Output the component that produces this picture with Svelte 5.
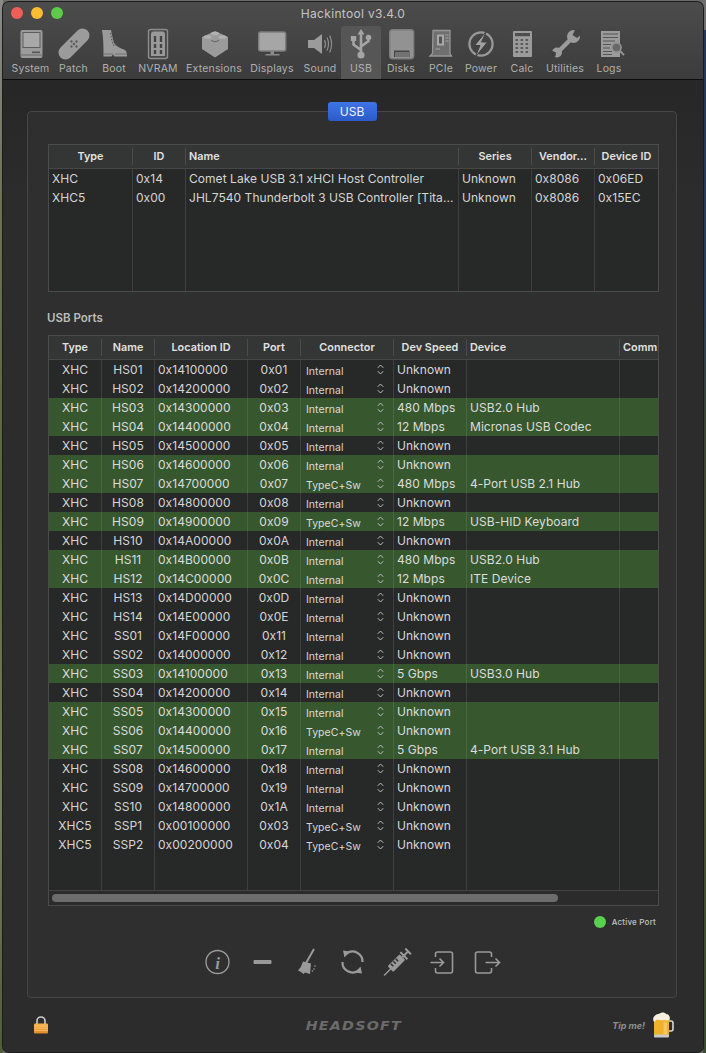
<script>
  const tools = ['System','Patch','Boot','NVRAM','Extensions','Displays','Sound','USB','Disks','PCIe','Power','Calc','Utilities','Logs'];

  const controllers = [
    { type: 'XHC', id: '0x14', name: 'Comet Lake USB 3.1 xHCI Host Controller', series: 'Unknown', vendor: '0x8086', device: '0x06ED' },
    { type: 'XHC5', id: '0x00', name: 'JHL7540 Thunderbolt 3 USB Controller [Tita...', series: 'Unknown', vendor: '0x8086', device: '0x15EC' }
  ];

  const I = 'Internal', T = 'TypeC+Sw', U = 'Unknown';
  // type, name, location, port, connector, speed, device, active
  const ports = [
    ['XHC','HS01','0x14100000','0x01',I,U,'',0],
    ['XHC','HS02','0x14200000','0x02',I,U,'',0],
    ['XHC','HS03','0x14300000','0x03',I,'480 Mbps','USB2.0 Hub',1],
    ['XHC','HS04','0x14400000','0x04',I,'12 Mbps','Micronas USB Codec',1],
    ['XHC','HS05','0x14500000','0x05',I,U,'',0],
    ['XHC','HS06','0x14600000','0x06',I,U,'',1],
    ['XHC','HS07','0x14700000','0x07',T,'480 Mbps','4-Port USB 2.1 Hub',1],
    ['XHC','HS08','0x14800000','0x08',I,U,'',0],
    ['XHC','HS09','0x14900000','0x09',T,'12 Mbps','USB-HID Keyboard',1],
    ['XHC','HS10','0x14A00000','0x0A',I,U,'',0],
    ['XHC','HS11','0x14B00000','0x0B',I,'480 Mbps','USB2.0 Hub',1],
    ['XHC','HS12','0x14C00000','0x0C',I,'12 Mbps','ITE Device',1],
    ['XHC','HS13','0x14D00000','0x0D',I,U,'',0],
    ['XHC','HS14','0x14E00000','0x0E',I,U,'',0],
    ['XHC','SS01','0x14F00000','0x11',I,U,'',0],
    ['XHC','SS02','0x14000000','0x12',I,U,'',0],
    ['XHC','SS03','0x14100000','0x13',I,'5 Gbps','USB3.0 Hub',1],
    ['XHC','SS04','0x14200000','0x14',I,U,'',0],
    ['XHC','SS05','0x14300000','0x15',I,U,'',1],
    ['XHC','SS06','0x14400000','0x16',T,U,'',1],
    ['XHC','SS07','0x14500000','0x17',I,'5 Gbps','4-Port USB 3.1 Hub',1],
    ['XHC','SS08','0x14600000','0x18',I,U,'',0],
    ['XHC','SS09','0x14700000','0x19',I,U,'',0],
    ['XHC','SS10','0x14800000','0x1A',I,U,'',0],
    ['XHC5','SSP1','0x00100000','0x03',T,U,'',0],
    ['XHC5','SSP2','0x00200000','0x04',T,U,'',0]
  ];
</script>

<div class="desktop">
  <div class="window">
    <header class="titlebar">
      <div class="title-row">
        <div class="lights"><i class="red"></i><i class="yellow"></i><i class="green"></i></div>
        <span class="title">Hackintool v3.4.0</span>
      </div>
      <nav class="toolbar">
        {#each tools as tool}
          <div class="tool" class:selected={tool === 'USB'}>
            <svg class="tool-icon" viewBox="0 0 32 32" width="32" height="32">
              {#if tool === 'System'}
                <rect x="5.5" y="2" width="22" height="28" rx="2" fill="#9b9b9b"/>
                <rect x="8" y="4.5" width="17" height="15" fill="#a8a8a8" stroke="#5e5e5e"/>
                <rect x="17" y="23.5" width="8" height="1.6" fill="#555"/>
                <rect x="5.5" y="26.5" width="22" height="1" fill="#6a6a6a"/>
              {:else if tool === 'Patch'}
                <g transform="rotate(-45 16 16)">
                  <rect x="-3" y="9" width="38" height="14" rx="7" fill="#9b9b9b"/>
                  <g fill="#555">
                    <circle cx="16" cy="16" r="1.2"/><circle cx="12.5" cy="16" r="1.2"/><circle cx="19.5" cy="16" r="1.2"/>
                    <circle cx="16" cy="12.5" r="1.2"/><circle cx="16" cy="19.5" r="1.2"/>
                  </g>
                </g>
              {:else if tool === 'Boot'}
                <path d="M4 2 L13 2 L14 7 L15.5 13 C16.5 18 22 20 26 21.5 C28.5 22.5 29 25 29 28.5 L16.5 28.5 L15 26.5 L13.5 28.5 L5.5 28.5 C5.5 20 5.5 10 4 2Z" fill="#9b9b9b"/>
                <path d="M12.5 5 L14 13 L16 18" fill="none" stroke="#5e5e5e" stroke-width="1.2" stroke-dasharray="1.5 1.5"/>
                <path d="M6 26 H15 M17 26 H29" stroke="#6a6a6a" stroke-width=".8"/>
              {:else if tool === 'NVRAM'}
                <rect x="6.5" y="1.5" width="19" height="29" rx="2" fill="#484848" stroke="#8d8d8d" stroke-width="1.4"/>
                <path d="M9 6 Q9 3.5 11 3.5 H21 Q23 3.5 23 6 V28 H9Z" fill="#999"/>
                <path d="M13 8 V14 M13 16 V20 M13 22 V26 M19 8 V14 M19 16 V20 M19 22 V26" stroke="#444" stroke-width="2.4"/>
              {:else if tool === 'Extensions'}
                <path d="M17 3 L30 9 V21 L17 29.5 L4 21 V9Z" fill="#9b9b9b"/>
                <ellipse cx="17" cy="5.5" rx="4" ry="1.8" fill="#b0b0b0"/>
                <ellipse cx="9.5" cy="9" rx="4" ry="1.8" fill="#b0b0b0"/>
                <ellipse cx="24.5" cy="9" rx="4" ry="1.8" fill="#b0b0b0"/>
                <path d="M13 12.5 Q17 15 21 12.5" fill="none" stroke="#666" stroke-width="1"/>
              {:else if tool === 'Displays'}
                <rect x="2.7" y="4" width="27" height="19" rx="2" fill="#a6a6a6" stroke="#7d7d7d" stroke-width="1.5"/>
                <rect x="14.5" y="23" width="3.5" height="3" fill="#8a8a8a"/>
                <rect x="9.5" y="26" width="14" height="1.5" fill="#8a8a8a"/>
              {:else if tool === 'Sound'}
                <path d="M4 12 H10 L18 6 V26 L10 20 H4Z" fill="#9b9b9b"/>
                <path d="M20.5 12 Q22.5 16 20.5 20 M23 9.5 Q26 16 23 22.5 M25.7 7.5 Q29.5 16 25.7 24.5" fill="none" stroke="#8d8d8d" stroke-width="1.2"/>
              {:else if tool === 'USB'}
                <path d="M16 4 V27 M16 22 L8.5 16.5 V12 M16 18.5 L23.5 13 V10" fill="none" stroke="#a4a4a4" stroke-width="2.6"/>
                <path d="M16 1 L19.5 6.5 H12.5Z M5.8 8 H11.2 V13 H5.8Z" fill="#a4a4a4"/>
                <circle cx="23.5" cy="9.5" r="2.8" fill="#a4a4a4"/>
                <circle cx="16" cy="27" r="3.6" fill="#a4a4a4"/>
              {:else if tool === 'Disks'}
                <rect x="4.7" y="1.7" width="24" height="29" rx="3" fill="#929292" stroke="#7d7d7d" stroke-width="1.4"/>
                <rect x="9" y="22.5" width="15.5" height="6.5" fill="#454545"/>
                <path d="M11 24 V29 M13 24 V29 M15 24 V29 M17 24 V29 M19 24 V29 M21 24 V29 M23 24 V29" stroke="#aaa" stroke-width=".9"/>
              {:else if tool === 'PCIe'}
                <path d="M8 2.5 H25 V25.5 L26.5 28 H5 L7.5 25.5Z" fill="#6f6f6f" stroke="#969696" stroke-width="1.3"/>
                <rect x="12" y="6.5" width="7" height="11" fill="#a8a8a8"/>
                <rect x="14" y="8.5" width="3" height="7" fill="#555"/>
                <path d="M20.5 7 H23.5 M20.5 10 H23.5 M20.5 13 H23.5 M10.5 21 H15" stroke="#a8a8a8" stroke-width="1.2"/>
              {:else if tool === 'Power'}
                <circle cx="16" cy="16" r="11.6" fill="none" stroke="#999" stroke-width="2.2"/>
                <path d="M22 2.5 L9.5 17.5 H15 L10 29.5 L22.5 14 H16.5Z" fill="#a2a2a2" stroke="#414141" stroke-width="1"/>
              {:else if tool === 'Calc'}
                <rect x="7" y="3" width="19" height="26" rx="1" fill="#9b9b9b"/>
                <rect x="9" y="5" width="15" height="3.2" fill="#4d4d4d"/>
                <path d="M9.5 12 H24 M9.5 16 H24 M9.5 20 H24 M9.5 24 H24" stroke="#5b5b5b" stroke-width="2" stroke-dasharray="2.6 2.4"/>
              {:else if tool === 'Utilities'}
                <path d="M9 24 L24 9" stroke="#9b9b9b" stroke-width="4.5"/>
                <circle cx="24.5" cy="8.5" r="6.5" fill="#9b9b9b"/>
                <circle cx="8" cy="24.5" r="5" fill="#9b9b9b"/>
                <path d="M32 1 L26 2 L23.5 7 L28 10 L33 6Z" fill="#434343"/>
                <path d="M1 22 L7 24.5 L6.5 28 L2 31Z" fill="#3f3f3f"/>
              {:else if tool === 'Logs'}
                <rect x="8" y="3" width="19" height="26" fill="#9b9b9b"/>
                <path d="M10 6 H25 M10 9.5 H25 M10 13 H22 M10 16.5 H18 M10 20 H17 M10 23.5 H19 M10 26.5 H19" stroke="#555" stroke-width="1.2"/>
                <circle cx="23.5" cy="19.5" r="4.6" fill="#686868" stroke="#929292" stroke-width="1.6"/>
                <path d="M27 23 L31 27" stroke="#929292" stroke-width="2"/>
              {/if}
            </svg>
            <span>{tool}</span>
          </div>
        {/each}
      </nav>
    </header>

    <main class="content">
      <section class="panel">
        <div class="tab">USB</div>

        <div class="table controllers">
          <div class="row head">
            <div class="c">Type</div><div class="c">ID</div><div>Name</div><div class="c">Series</div><div class="c">Vendor...</div><div class="c">Device ID</div>
          </div>
          {#each controllers as c}
            <div class="row">
              <div>{c.type}</div><div>{c.id}</div><div>{c.name}</div><div>{c.series}</div><div>{c.vendor}</div><div>{c.device}</div>
            </div>
          {/each}
          <div class="row filler top-filler"><div></div><div></div><div></div><div></div><div></div><div></div></div>
        </div>

        <h3 class="section">USB Ports</h3>

        <div class="table ports">
          <div class="row head">
            <div class="c">Type</div><div class="c">Name</div><div class="c">Location ID</div><div class="c">Port</div><div class="c">Connector</div><div class="c">Dev Speed</div><div>Device</div><div>Comm</div>
          </div>
          {#each ports as p}
            <div class="row" class:active={p[7]}>
              <div class="c">{p[0]}</div>
              <div class="c">{p[1]}</div>
              <div>{p[2]}</div>
              <div class="c">{p[3]}</div>
              <div class="connector">
                <span>{p[4]}</span>
                <svg viewBox="0 0 7 11" width="7" height="11"><path d="M.8 3.8 L3.5 1 L6.2 3.8 M.8 7.2 L3.5 10 L6.2 7.2" fill="none" stroke="#bbb" stroke-width="1"/></svg>
              </div>
              <div>{p[5]}</div>
              <div>{p[6]}</div>
              <div></div>
            </div>
          {/each}
          <div class="row filler bottom-filler"><div></div><div></div><div></div><div></div><div></div><div></div><div></div><div></div></div>
          <div class="scrollbar"><div class="thumb"></div></div>
        </div>

        <div class="legend"><i class="dot"></i><span>Active Port</span></div>

        <div class="actions">
          <svg viewBox="0 0 40 28" width="45" height="28">
            <circle cx="20" cy="14" r="11.5" fill="none" stroke="#9a9a9a" stroke-width="1.4"/>
            <text x="20" y="20.5" text-anchor="middle" class="info-i">i</text>
          </svg>
          <svg viewBox="0 0 45 28" width="45" height="28"><rect x="13.5" y="12" width="18" height="4" rx="1" fill="#9a9a9a"/></svg>
          <svg viewBox="0 0 45 28" width="45" height="28" fill="#9a9a9a">
            <path d="M29 1 L21 15" stroke="#9a9a9a" stroke-width="2" fill="none"/>
            <path d="M18 13.5 L26 15.5 L25 26 L20 24.5 L18.5 26 L16 24 L13 22.5 Q16.5 19 18 13.5Z"/>
            <circle cx="30" cy="18" r=".8"/><circle cx="29" cy="21" r=".8"/><circle cx="27.5" cy="23" r=".8"/>
          </svg>
          <svg viewBox="0 0 40 28" width="45" height="28">
            <path d="M14 5.5 A10 10 0 0 1 30 14 M26 22.5 A10 10 0 0 1 10 14" fill="none" stroke="#9a9a9a" stroke-width="2.2"/>
            <path d="M10.5 2.5 L17.5 3.5 L12 9.5Z M29.5 25.5 L22.5 24.5 L28 18.5Z" fill="#9a9a9a"/>
          </svg>
          <svg viewBox="0 0 40 28" width="45" height="28">
            <g transform="rotate(-45 20 14)">
              <path d="M1 14 H12" stroke="#9a9a9a" stroke-width="1.4"/>
              <rect x="10" y="10" width="17" height="8" rx="1" fill="#9a9a9a"/>
              <path d="M14 10.5 V14 M17.5 10.5 V14 M21 10.5 V14" stroke="#333" stroke-width="1.6"/>
              <path d="M27 14 H34 M29 9 V19 M35 10 V18" stroke="#9a9a9a" stroke-width="2"/>
            </g>
          </svg>
          <svg viewBox="0 0 40 28" width="45" height="28" fill="none" stroke="#9a9a9a" stroke-width="1.6">
            <path d="M13 9 V6 a2 2 0 0 1 2-2 H28 a2 2 0 0 1 2 2 V23 a2 2 0 0 1-2 2 H15 a2 2 0 0 1-2-2 V20"/>
            <path d="M8 14.5 H21 M17 10.5 L21 14.5 L17 18.5"/>
          </svg>
          <svg viewBox="0 0 40 28" width="45" height="28" fill="none" stroke="#9a9a9a" stroke-width="1.6">
            <path d="M24 9 V6 a2 2 0 0 0-2-2 H10 a2 2 0 0 0-2 2 V23 a2 2 0 0 0 2 2 H22 a2 2 0 0 0 2-2 V20"/>
            <path d="M18 14.5 H32 M28 10.5 L32 14.5 L28 18.5"/>
          </svg>
        </div>
      </section>

      <footer class="footer">
        <svg class="lock" viewBox="0 0 16 18" width="16" height="18">
          <defs><linearGradient id="lockbody" x1="0" y1="0" x2="0" y2="1"><stop offset="0" stop-color="#f7b34b"/><stop offset="1" stop-color="#e08a25"/></linearGradient></defs>
          <path d="M4 8 V5 a4 4 0 0 1 8 0 V8" fill="none" stroke="#cfcfcf" stroke-width="1.6"/>
          <rect x="1" y="7.5" width="14" height="10" rx="1" fill="url(#lockbody)"/>
          <path d="M1 10 H15 M1 12.2 H15 M1 14.4 H15" stroke="#fbd392" stroke-width=".6"/>
        </svg>
        <span class="brand">HEADSOFT</span>
        <div class="tip">
          <span>Tip me!</span>
          <svg viewBox="0 0 22 26" width="22" height="26">
            <path d="M16 9 H19 a2 2 0 0 1 2 2 V17 a2 2 0 0 1-2 2 H16" fill="none" stroke="#d8d8d8" stroke-width="1.6"/>
            <path d="M2 7 H17 V23 a2 2 0 0 1-2 2 H4 a2 2 0 0 1-2-2Z" fill="#efb02c"/>
            <rect x="2" y="22.5" width="15" height="3" rx="1" fill="#c9c9c9"/>
            <path d="M1.5 9 C0 5 4 1.5 7 2 C9 0 13 0 14 2 C17 2 18.5 5 17.5 8 C15 9 14 8 12 8 C8 9 6 7 4 8 C3 9 3 11 1.5 9Z" fill="#f7f0dc"/>
            <rect x="11.5" y="10" width="3.5" height="12" fill="#f6c75a"/>
          </svg>
        </div>
      </footer>
    </main>
  </div>
</div>

<style>
  :global(body) {
    margin: 0;
    background: #2b2b2b;
  }

  .desktop {
    width: 706px;
    height: 1053px;
    box-sizing: border-box;
    padding: 2px 3px 1px 3px;
    overflow: hidden;
    background:
      linear-gradient(180deg, #6f6f6f 0 30px, #26375a 30px, #2a3f5e 300px, #3c4435 420px, #4e5530 700px, #3b4a30 1053px) right / 3px 100% no-repeat,
      linear-gradient(180deg, #8a8a8a 0 8px, #6d7254 200px, #56663c 500px, #77805c 800px, #4f5c38 1053px) left / 3px 100% no-repeat,
      #6b6b6b;
    font-family: Inter, "Liberation Sans", sans-serif;
  }

  .window {
    height: 100%;
    display: flex;
    flex-direction: column;
    border-radius: 6px;
    overflow: hidden;
    background: #2a2a2a;
    box-shadow: 0 0 0 1px #1c1c1c;
  }

  .titlebar {
    height: 77px;
    flex: none;
    background: linear-gradient(180deg, #4c4c4c, #3c3c3c);
    border-bottom: 1px solid #0c0c0c;
    display: flex;
    flex-direction: column;
  }

  .title-row {
    height: 24px;
    box-sizing: border-box;
    padding-bottom: 2px;
    flex: none;
    display: flex;
    align-items: center;
    justify-content: center;
    position: relative;
  }

  .title {
    font-size: 12px;
    color: #c4c4c4;
    letter-spacing: .32px;
  }

  .lights {
    position: absolute;
    left: 8px;
    top: 5px;
    display: flex;
    gap: 8px;
  }

  .lights i {
    width: 12px;
    height: 12px;
    border-radius: 50%;
  }

  .red { background: #ee5f58; }
  .yellow { background: #f8bd30; }
  .green { background: #5ccb47; }

  .toolbar {
    flex: 1;
    display: grid;
    grid-template-columns: 43px 43px 38px 50px 62px 54px 42px 40px 40px 40px 40px 42px 44px 44px;
    padding-left: 6px;
  }

  .tool {
    display: flex;
    flex-direction: column;
    align-items: center;
    color: #b0b0b0;
    font-size: 10.5px;
    white-space: nowrap;
    padding-top: 2px;
  }

  .tool span {
    margin-top: 2px;
    letter-spacing: .18px;
  }

  .tool.selected {
    background: #565656;
    border-radius: 3px 3px 0 0;
  }

  .tool-icon {
    flex: none;
  }

  .content {
    flex: 1;
    display: flex;
    flex-direction: column;
    padding: 31px 26px 0 24px;
    background: linear-gradient(180deg, #272727, #2c2c2c 120px);
  }

  .panel {
    height: 887px;
    flex: none;
    box-sizing: border-box;
    border: 1px solid #464646;
    border-radius: 4px;
    background: #2f2f2f;
    padding: 0 18px 0 20px;
    display: flex;
    flex-direction: column;
  }

  .tab {
    align-self: center;
    width: 49px;
    height: 19px;
    margin: -10px 2px 23px 0;
    flex: none;
    border-radius: 3px;
    background: linear-gradient(180deg, #3e74e6, #2c5bc9);
    color: #f2f2f2;
    font-size: 12px;
    line-height: 19px;
    text-align: center;
  }

  .table {
    flex: none;
    width: 611px;
    box-sizing: border-box;
    border: 1px solid #4b4b4b;
    background: #272828;
    color: #d6d6d6;
    font-size: 12px;
    overflow: hidden;
  }

  .row {
    display: grid;
    height: 19px;
  }

  .controllers .row { grid-template-columns: 84px 53px 273px 73px 63px 63px; }
  .ports .row { grid-template-columns: 53px 53px 93px 53px 93px 73px 153px 38px; }

  .row > div {
    box-sizing: border-box;
    border-right: 1px solid #3f3f3f;
    padding: 0 3px;
    line-height: 19px;
    white-space: nowrap;
    overflow: hidden;
    letter-spacing: .05px;
  }

  .row > div:last-child {
    border-right: none;
  }

  .row > .c {
    text-align: center;
  }

  .row.active {
    background: #37582f;
    color: #dcdcdc;
  }

  .row.active > div {
    border-right-color: #4a6743;
  }

  .head {
    height: 24px;
    background: #343535;
    border-bottom: 1px solid #474747;
    box-sizing: border-box;
  }

  .row.head > div {
    height: 17px;
    margin: 3px 0;
    line-height: 17px;
    font-size: 10.8px;
    font-weight: 600;
    color: #e2e2e2;
    border-right-color: #4b4b4b;
  }

  .row .connector {
    display: flex;
    align-items: center;
    justify-content: space-between;
    padding: 0 9px 0 5px;
    font-size: 10.5px;
  }

  .connector span {
    margin-top: 3px;
  }

  .top-filler { height: 84px; }
  .bottom-filler { height: 36px; }

  .scrollbar {
    height: 15px;
    box-sizing: border-box;
    border-top: 1px solid #434343;
    background: #2b2b2b;
    padding: 3px;
  }

  .thumb {
    width: 506px;
    height: 8px;
    border-radius: 4px;
    background: #6c6c6c;
  }

  .section {
    margin: 18px 0 9px -1px;
    height: 16px;
    line-height: 16px;
    font-size: 11.5px;
    font-weight: 600;
    color: #bdbdbd;
  }

  .legend {
    align-self: flex-end;
    display: flex;
    align-items: center;
    gap: 6px;
    margin: 10px 2px 0 0;
    height: 12px;
    color: #c2c2c2;
    font-size: 8px;
    font-weight: 500;
    letter-spacing: .2px;
    white-space: nowrap;
  }

  .dot {
    width: 12px;
    height: 12px;
    border-radius: 50%;
    background: #5ad04f;
  }

  .actions {
    display: flex;
    justify-content: center;
    margin: 20px 0 0 -2px;
  }

  .info-i {
    font: italic 700 17px "Liberation Serif", serif;
    fill: #9a9a9a;
  }

  .footer {
    flex: 1;
    display: grid;
    grid-template-columns: 1fr auto 1fr;
    align-items: center;
    padding: 0 3px 0 6px;
  }

  .lock {
    justify-self: start;
  }

  .brand {
    font: italic 700 11.5px "DejaVu Sans", sans-serif;
    color: #6b6b6b;
    letter-spacing: 1px;
    transform: scaleX(1.24);
    margin-top: 1px;
  }

  .tip {
    justify-self: end;
    display: flex;
    align-items: center;
    gap: 7px;
    font-size: 9px;
    font-style: italic;
    font-weight: 700;
    color: #8e8e8e;
  }
</style>
